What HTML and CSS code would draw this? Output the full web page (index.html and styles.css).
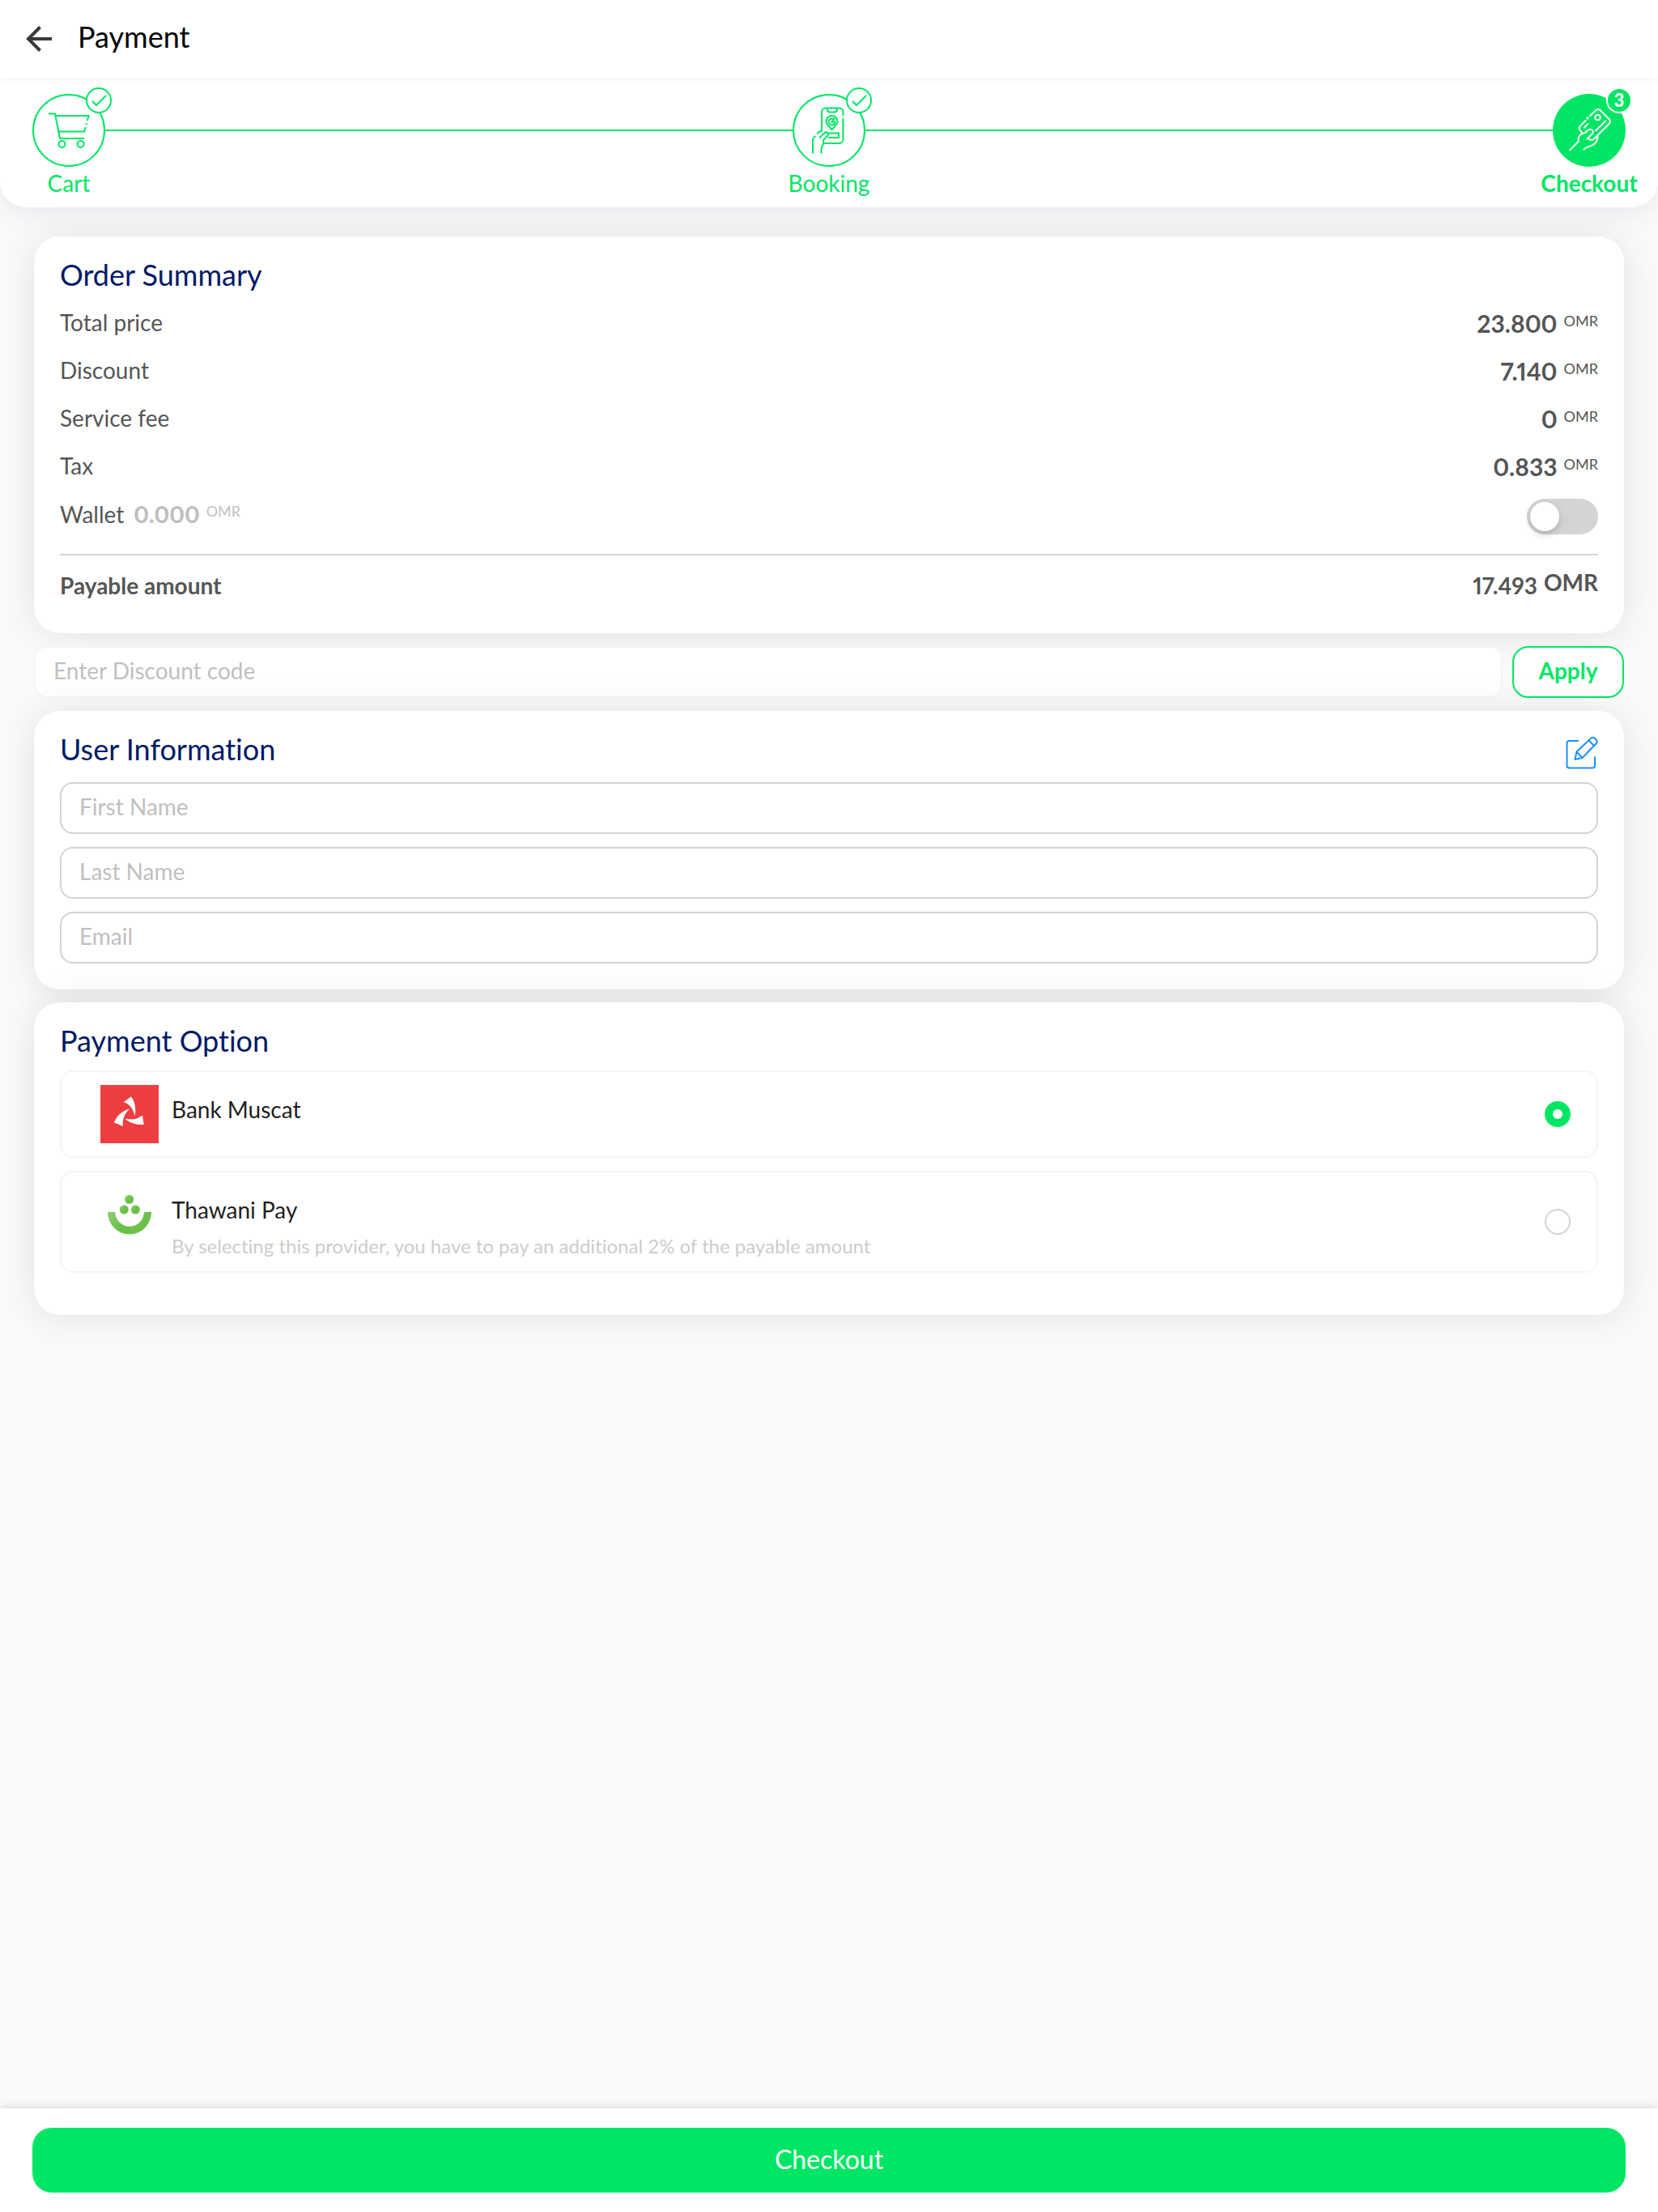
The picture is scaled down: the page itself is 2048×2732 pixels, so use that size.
FILE: index.html
```html
<!DOCTYPE html>
<html lang="en">
<head>
<meta charset="utf-8">
<meta name="viewport" content="width=device-width, initial-scale=1">
<title>Payment</title>
<link rel="stylesheet" href="styles.css">
</head>
<body>
<header class="topbar">
  <button class="icon-button" type="button" aria-label="Back">
    <svg width="32" height="32" viewBox="0 0 32 32" fill="none" stroke="#3a3a3a" stroke-width="4"><path d="M32 16H3M17.500 1.500 3 16l14.500 14.500"/></svg>
  </button>
  <h1 class="topbar-title">Payment</h1>
</header>

<nav class="stepper" aria-label="Progress">
  <div class="step">
    <div class="step-circle">
      <svg width="90" height="90" viewBox="0 0 90 90" fill="none" stroke="currentColor" stroke-width="2">
        <circle cx="45" cy="45" r="44"/>
        <path d="M20 24.500h8L34 55h30M28.500 27H69.500l-1.700 6M67 36l-.5 2M65.800 41 64 46.500H32.500"/>
        <circle cx="36.500" cy="62" r="4"/><circle cx="59.500" cy="62" r="4"/>
      </svg>
      <span class="badge"><svg width="32" height="32" viewBox="0 0 32 32" fill="#fff" stroke="currentColor" stroke-width="2"><circle cx="16" cy="16" r="15"/><path fill="none" d="m8 17 5 5L25 10"/></svg></span>
    </div>
    <span class="step-label">Cart</span>
  </div>
  <span class="connector"></span>
  <div class="step">
    <div class="step-circle">
      <svg width="90" height="90" viewBox="0 0 90 90" fill="none" stroke="currentColor" stroke-width="2">
        <circle cx="45" cy="45" r="44"/>
        <path d="M36 47V22.500a5 5 0 0 1 5-5h16.500a5 5 0 0 1 5 5V27M62.500 30v26a5 5 0 0 1-5 5H38.500"/>
        <path d="M43 18v1.500a3 3 0 0 0 3 3h6a3 3 0 0 0 3-3V18"/>
        <path d="M48.500 44c-4-4-7-6.500-7-10a7 7 0 1 1 14 0c0 3.500-3 6-7 10z"/>
        <path d="M51 31.300a4 4 0 1 0 1.500 3.200h-4l4-5"/>
        <path d="M44.500 48.500H57V54H44M25 73.500V58c0-3 1-4.500 3.500-6M30 49.500c2-2.500 3-3.500 6-3.500M33 54.500l6-6c2.500-2.500 6.500 0 4.500 3L38 57v4c0 2.500-2.500 3-2.500 7v5.500"/>
      </svg>
      <span class="badge"><svg width="32" height="32" viewBox="0 0 32 32" fill="#fff" stroke="currentColor" stroke-width="2"><circle cx="16" cy="16" r="15"/><path fill="none" d="m8 17 5 5L25 10"/></svg></span>
    </div>
    <span class="step-label">Booking</span>
  </div>
  <span class="connector"></span>
  <div class="step step-current" aria-current="step">
    <div class="step-circle">
      <svg width="90" height="90" viewBox="0 0 90 90" fill="none" stroke="#fff" stroke-width="2" stroke-linecap="round">
        <circle cx="45" cy="45" r="45" fill="currentColor" stroke="none"/>
        <path d="m46 27 7-6.500c2-2 4-2 6 0L69.500 31c1.800 2 1.800 4 0 6L51 55.500c-2 2-5 1.500-7-.5M40.500 33l-6.500 6.500c-2 2-1.500 4 0 6l3.500 3.500"/>
        <circle cx="55.500" cy="29" r="3.300"/>
        <path d="M65 33.500 53 45.500M43.500 37 39 41.500"/>
        <circle cx="43" cy="30" r=".7"/>
        <path d="m21.500 69 10-10c0-5 .5-8 5-10 4 0 5-3 7.500-4.500 3.500-2 7.500 1 5 4.500L42.500 55.500M38.500 68.500c3-4 7-3 11-5.500 5-3 6-6 6-11"/>
      </svg>
      <span class="badge badge-number">3</span>
    </div>
    <span class="step-label">Checkout</span>
  </div>
</nav>

<main class="content">
  <section class="card summary">
    <h2 class="card-title">Order Summary</h2>
    <dl class="rows">
      <div class="row"><dt>Total price</dt><dd class="amount">23.800<span class="currency">OMR</span></dd></div>
      <div class="row"><dt>Discount</dt><dd class="amount">7.140<span class="currency">OMR</span></dd></div>
      <div class="row"><dt>Service fee</dt><dd class="amount">0<span class="currency">OMR</span></dd></div>
      <div class="row"><dt>Tax</dt><dd class="amount">0.833<span class="currency">OMR</span></dd></div>
      <div class="row row-wallet">
        <dt><label for="wallet">Wallet</label><span class="wallet-amount">0.000<span class="currency">OMR</span></span></dt>
        <dd><input class="toggle" type="checkbox" id="wallet"></dd>
      </div>
      <div class="row row-total"><dt>Payable amount</dt><dd class="total">17.493<span class="currency">OMR</span></dd></div>
    </dl>
  </section>

  <form class="discount">
    <input class="field field-plain" type="text" placeholder="Enter Discount code" aria-label="Discount code">
    <button class="apply" type="button">Apply</button>
  </form>

  <section class="card user">
    <div class="card-head">
      <h2 class="card-title">User Information</h2>
      <button class="icon-button edit" type="button" aria-label="Edit">
        <svg width="40" height="40" viewBox="0 0 40 40" fill="none" stroke="#1890ff" stroke-width="2" stroke-linejoin="round"><path d="M16 5H4.500A3 3 0 0 0 1.500 8v27.500a3 3 0 0 0 3 3H33a3 3 0 0 0 3-3V24.500"/><path d="m11.500 28 2-9.500L31 2c1.500-1.500 3.500-1.500 5 0l1.500 1.500c1.500 1.500 1.500 3.500 0 5L20.500 26l-9 2zM13.500 18.500l7 7.500M28.500 4.500l7 7"/></svg>
      </button>
    </div>
    <form class="fields">
      <input class="field" type="text" placeholder="First Name" aria-label="First Name">
      <input class="field" type="text" placeholder="Last Name" aria-label="Last Name">
      <input class="field" type="email" placeholder="Email" aria-label="Email">
    </form>
  </section>

  <section class="card payment">
    <h2 class="card-title">Payment Option</h2>
    <div class="options">
      <label class="option">
        <svg class="option-logo" width="72" height="72" viewBox="0 0 72 72"><path fill="#ef3e42" d="M0 0h72v72H0z"/><g fill="#fff"><path d="M38 14.300 28.500 21.500c7 1 11.500 7 14.200 17 1.500-9 .3-17-4.700-24.200z"/><path d="M36 29.500C27 32 20 38 17 46.500L27.700 51c-.5-9 2-15.500 8.300-21.500z"/><path d="M30.300 41.500C38 43.500 45 43 52 37.500L53.700 49c-9 .5-17-1.500-23.400-7.500z"/></g></svg>
        <span class="option-text"><span class="option-name">Bank Muscat</span></span>
        <input class="radio" type="radio" name="provider" checked>
      </label>
      <label class="option">
        <svg class="option-logo" width="72" height="72" viewBox="0 0 72 72"><defs><linearGradient id="leaf" x1="0" y1="0" x2="1" y2="1"><stop offset="0" stop-color="#8ccf72"/><stop offset=".5" stop-color="#6cc04a"/></linearGradient></defs><g fill="url(#leaf)"><circle cx="35.700" cy="17.300" r="5.500"/><circle cx="29.300" cy="30" r="5.500"/><circle cx="43.300" cy="30" r="5.500"/><path d="M9 33h9.300a17.800 17.800 0 0 0 35.600 0H63a27 27.500 0 0 1-54 0z"/></g></svg>
        <span class="option-text"><span class="option-name">Thawani Pay</span><span class="option-note">By selecting this provider, you have to pay an additional 2% of the payable amount</span></span>
        <input class="radio" type="radio" name="provider">
      </label>
    </div>
  </section>
</main>

<footer class="bottombar"><button class="checkout" type="button">Checkout</button></footer>
</body>
</html>
```
FILE: styles.css
```css
:root {
  --green: #00e664;
  --navy: #001a66;
  --text: #555;
  --muted: #bfbfbf;
  --line: #d4d4d4;
}

* { box-sizing: border-box; }

body {
  margin: 0;
  min-height: 100vh;
  display: flex;
  flex-direction: column;
  background: #fafafa;
  color: var(--text);
  font-family: Lato, "Open Sans", sans-serif;
  font-size: 28px;
  font-variant-ligatures: none;
}

h1, h2, dl, dd { margin: 0; font-weight: 400; }
input, button { font: inherit; }
button { cursor: pointer; }

.icon-button {
  display: block;
  padding: 0;
  border: 0;
  background: none;
  line-height: 0;
}

.topbar {
  position: relative;
  z-index: 2;
  display: flex;
  align-items: center;
  gap: 32px;
  height: 96px;
  padding: 0 32px;
  background: #fff;
  box-shadow: 0 2px 8px rgba(0, 0, 0, .05);
}
.topbar-title { color: #000; font-size: 36px; line-height: 40px; padding-bottom: 6px; }

/* Progress steps */
.stepper {
  position: relative;
  z-index: 1;
  display: flex;
  height: 160px;
  padding: 20px 40px 0;
  background: #fff;
  border-radius: 0 0 32px 32px;
  box-shadow: 0 6px 32px rgba(60, 80, 120, .1);
  color: var(--green);
}
.step { width: 90px; display: flex; flex-direction: column; align-items: center; }
.step-circle { position: relative; height: 90px; }
.step-circle svg { display: block; }
.badge { position: absolute; top: -8px; left: 66px; }
.badge-number {
  width: 32px;
  height: 32px;
  border: 2px solid #fff;
  border-radius: 50%;
  background: var(--green);
  color: #fff;
  font-size: 22px;
  font-weight: 900;
  line-height: 28px;
  text-align: center;
}
.step-label { line-height: 40px; white-space: nowrap; }
.step-current .step-label { font-weight: 700; }
.connector { flex: 1; height: 2px; margin-top: 44px; background: var(--green); }

.content {
  flex: 1;
  display: flex;
  flex-direction: column;
  gap: 16px;
  padding: 36px 42px;
}

.card {
  padding: 24px 32px 32px;
  background: #fff;
  border-radius: 32px;
  box-shadow: 0 2px 48px rgba(0, 0, 0, .1);
}
.card-title { color: var(--navy); font-size: 36px; line-height: 46px; }
.card-head { display: flex; justify-content: space-between; height: 56px; }
.edit { align-self: center; }

/* Order summary */
.summary { padding-bottom: 22px; }
.rows { padding-top: 6px; font-variant-numeric: proportional-nums; }
.row { display: flex; justify-content: space-between; align-items: center; height: 59px; }
.currency { margin-left: 8px; font-size: 18px; font-weight: 400; vertical-align: 8px; line-height: 20px; }
.amount { padding-top: 2px; font-size: 30px; font-weight: 700; }
.row-wallet { height: 68px; }
.row-wallet dt { padding-bottom: 6px; }
.wallet-amount { margin-left: 12px; color: var(--muted); font-weight: 900; }
.row-total { height: 76px; margin-top: 12px; border-top: 2px solid var(--line); }
.row-total dt, .total { font-weight: 700; }
.total .currency { font-size: 28px; font-weight: 700; vertical-align: 4px; }

.toggle {
  display: block;
  appearance: none;
  width: 88px;
  height: 44px;
  margin: 0;
  padding: 4px;
  border-radius: 22px;
  background: var(--line);
}
.toggle::before {
  content: "";
  display: block;
  width: 36px;
  height: 36px;
  border-radius: 50%;
  background: #fff;
  box-shadow: 0 4px 8px rgba(0, 35, 11, .2);
}
.toggle:checked { background: var(--green); }
.toggle:checked::before { margin-left: 44px; }

/* Fields */
.discount { display: flex; gap: 12px; }
.field {
  width: 100%;
  height: 64px;
  padding: 0 22px 4px;
  border: 2px solid var(--line);
  border-radius: 16px;
  background: #fff;
  color: var(--text);
}
.field::placeholder { color: var(--muted); opacity: 1; }
.field-plain { flex: 1; border-color: #f5f5f5; }
.apply {
  width: 138px;
  height: 64px;
  padding: 0 0 4px;
  border: 2px solid var(--green);
  border-radius: 20px;
  background: #fff;
  color: var(--green);
  font-weight: 700;
}
.fields { display: flex; flex-direction: column; gap: 16px; padding-top: 8px; }

/* Payment options */
.payment { padding-bottom: 52px; }
.options { display: flex; flex-direction: column; gap: 16px; padding-top: 14px; }
.option {
  display: flex;
  align-items: flex-start;
  gap: 16px;
  padding: 16px 32px 16px 48px;
  border: 2px solid #f5f5f5;
  border-radius: 16px;
}
.option-logo { flex: none; }
.option-text { flex: 1; display: flex; flex-direction: column; }
.option-name { color: #1f1f1f; line-height: 60px; }
.option-note { color: #ccc; font-size: 24px; line-height: 30px; }
.radio {
  align-self: center;
  appearance: none;
  width: 32px;
  height: 32px;
  margin: 0;
  border: 2px solid var(--line);
  border-radius: 50%;
  background: #fff;
}
.radio:checked { border: 10px solid var(--green); }

.bottombar {
  position: sticky;
  bottom: 0;
  padding: 24px 40px;
  background: #fff;
  box-shadow: 0 0 12px rgba(0, 0, 0, .18);
}
.checkout {
  display: block;
  width: 100%;
  height: 80px;
  padding: 0 0 4px;
  border: 0;
  border-radius: 24px;
  background: var(--green);
  color: #fff;
  font-size: 32px;
}
```
